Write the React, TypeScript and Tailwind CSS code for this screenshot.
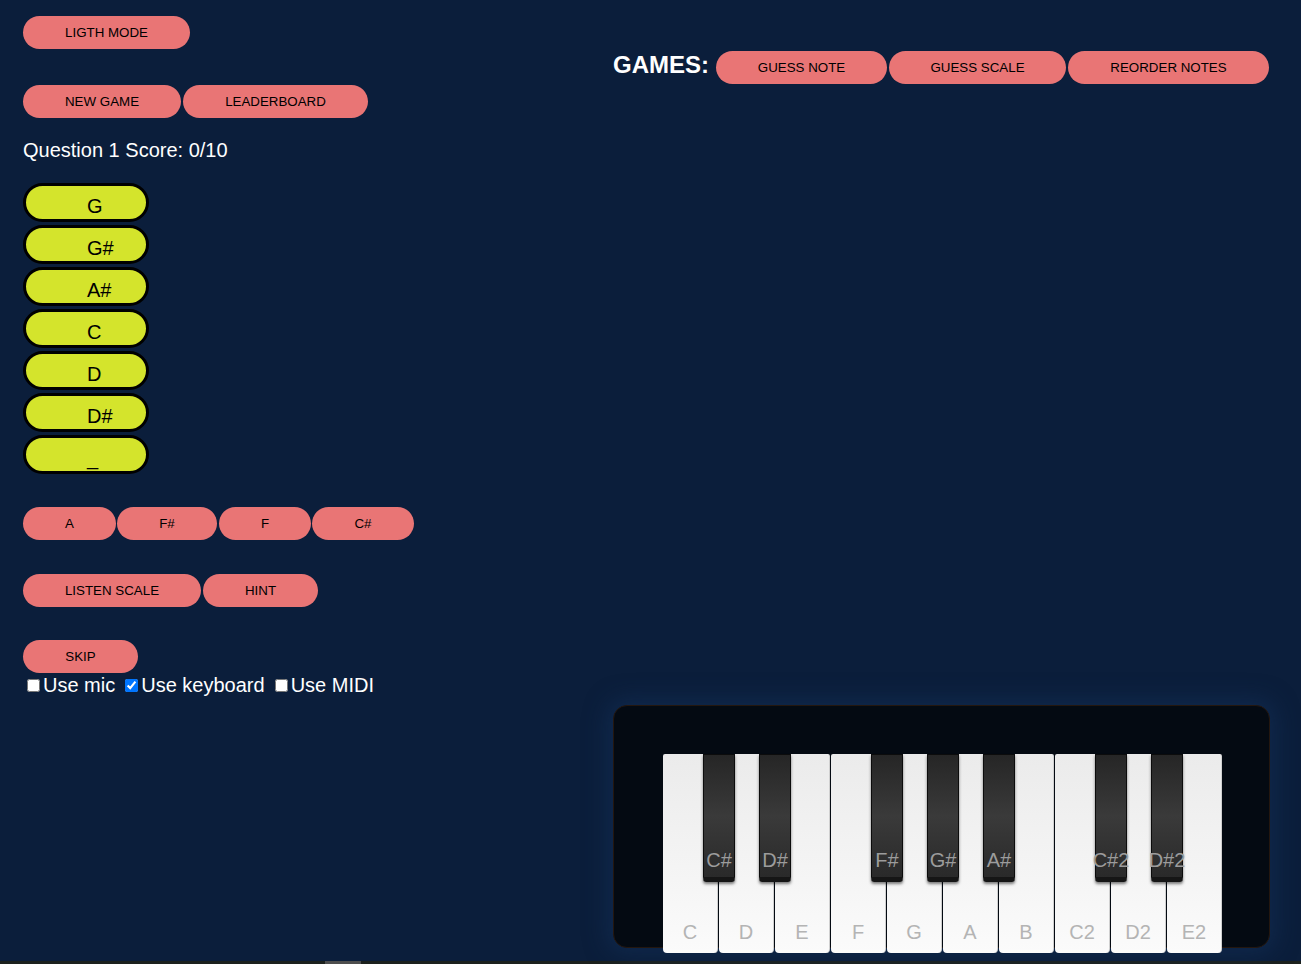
import React from "react";

const pill =
  "h-[33px] rounded-full bg-[#e97575] text-[13.33px] text-black flex items-center justify-center";

const scale = ["G", "G#", "A#", "C", "D", "D#", "_"];

const whiteKeys = ["C", "D", "E", "F", "G", "A", "B", "C2", "D2", "E2"];
// black key label and the white-key boundary index it sits on
const blackKeys = [
  { name: "C#", at: 1 },
  { name: "D#", at: 2 },
  { name: "F#", at: 4 },
  { name: "G#", at: 5 },
  { name: "A#", at: 6 },
  { name: "C#2", at: 8 },
  { name: "D#2", at: 9 },
];

function Piano() {
  return (
    <div className="w-[657px] h-[243px] rounded-[14px] bg-[#040a12] border border-[#24170f] shadow-[0_0_22px_6px_rgba(20,50,90,0.55)] pl-[49px] pt-[48px]">
      <div className="relative flex gap-[1px] w-[560px]">
        {whiteKeys.map((k) => (
          <div
            key={k}
            className="w-[55px] h-[199px] rounded-t-[2px] rounded-b-[4px] bg-gradient-to-b from-[#ebebeb] to-[#fbfbfb] border-r border-[#d0d0d0] flex items-end justify-center pb-[11px] text-[20px] leading-none text-[#b4b4b4]"
          >
            {k}
          </div>
        ))}
        {blackKeys.map((b) => (
          <div
            key={b.name}
            style={{ left: b.at * 56 - 16 }}
            className="absolute top-0 w-[32px] h-[128px] rounded-b-[3px] bg-gradient-to-b from-[#262626] via-[#3a3a3a] to-[#2a2a2a] border border-[#0c0c0c] border-b-[5px] border-b-[#161616] shadow-[0_2px_3px_rgba(0,0,0,0.5)] flex items-end justify-center pb-[7px] text-[20px] leading-none text-[#9c9c9c] whitespace-nowrap"
          >
            <span className="-mx-4">{b.name}</span>
          </div>
        ))}
      </div>
    </div>
  );
}

export default function App() {
  return (
    <div className="bg-[#0b1e3b] font-['Liberation_Sans',Arial,sans-serif] overflow-hidden">
      <div className="h-[961px] flex">
        {/* Left: game controls */}
        <div className="w-[613px] pl-[23px] pt-[16px] flex flex-col items-start">
          <button className={`${pill} w-[167px]`}>LIGTH MODE</button>

          <div className="mt-[36px] flex gap-[2px]">
            <button className={`${pill} w-[158px]`}>NEW GAME</button>
            <button className={`${pill} w-[185px]`}>LEADERBOARD</button>
          </div>

          <p className="mt-[20px] text-[20px] leading-[24px] text-white">
            Question 1 Score: 0/10
          </p>

          <div className="mt-[21px] flex flex-col gap-[3px]">
            {scale.map((n, i) => (
              <div
                key={i}
                className="w-[126px] h-[39px] rounded-full bg-[#d4e42c] border-[3px] border-black pl-[61px] pt-[7px] flex items-center text-[20px] text-black"
              >
                {n}
              </div>
            ))}
          </div>

          <div className="mt-[33px] flex gap-[1px]">
            <button className={`${pill} w-[93px]`}>A</button>
            <button className={`${pill} w-[100px]`}>F#</button>
            <button className={`${pill} w-[92px] ml-[1px]`}>F</button>
            <button className={`${pill} w-[102px]`}>C#</button>
          </div>

          <div className="mt-[34px] flex gap-[2px]">
            <button className={`${pill} w-[178px]`}>LISTEN SCALE</button>
            <button className={`${pill} w-[115px]`}>HINT</button>
          </div>

          <button className={`${pill} w-[115px] h-[32px] mt-[33px]`}>SKIP</button>

          <div className="flex items-center text-[20px] leading-[24px] text-white">
            <label className="flex items-center">
              <input type="checkbox" className="w-[13px] h-[13px] ml-[4px] mr-[3px]" />
              Use mic
            </label>
            <label className="flex items-center ml-[6px]">
              <input type="checkbox" defaultChecked className="w-[13px] h-[13px] ml-[4px] mr-[3px]" />
              Use keyboard
            </label>
            <label className="flex items-center ml-[6px]">
              <input type="checkbox" className="w-[13px] h-[13px] ml-[4px] mr-[3px]" />
              Use MIDI
            </label>
          </div>
        </div>

        {/* Right: game picker and keyboard */}
        <div className="flex-1 pt-[51px] flex flex-col items-start">
          <div className="flex items-center">
            <h1 className="text-[24px] font-bold text-white leading-none pb-[6px] mr-[7px]">
              GAMES:
            </h1>
            <div className="flex gap-[2px]">
              <button className={`${pill} w-[171px]`}>GUESS NOTE</button>
              <button className={`${pill} w-[177px]`}>GUESS SCALE</button>
              <button className={`${pill} w-[201px]`}>REORDER NOTES</button>
            </div>
          </div>

          <div className="mt-[621px]">
            <Piano />
          </div>
        </div>
      </div>

      {/* horizontal scrollbar strip */}
      <div className="h-[3px] bg-[#1c211d] pl-[325px]">
        <div className="w-[36px] h-full bg-[#4e4e4e]" />
      </div>
    </div>
  );
}
